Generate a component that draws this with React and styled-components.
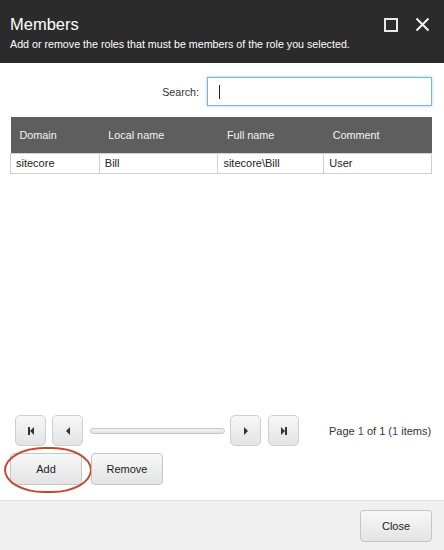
import React from "react";
import styled, { createGlobalStyle } from "styled-components";

const Global = createGlobalStyle`
  html, body { margin: 0; padding: 0; background: #fff; }
  body { font-family: Arial, "Liberation Sans", sans-serif; }
  * { box-sizing: border-box; }
`;

const Dialog = styled.div`
  width: 444px;
  height: 550px;
  display: flex;
  flex-direction: column;
  background: #fff;
`;

const Header = styled.div`
  background: #2b2b2b;
  height: 63px;
  padding: 13px 10px 0 10px;
  display: flex;
  justify-content: space-between;
  color: #fff;
`;

const Titles = styled.div`
  display: flex;
  flex-direction: column;
`;

const Title = styled.div`
  font-size: 16.5px;
  line-height: 22px;
`;

const Subtitle = styled.div`
  font-size: 10.7px;
  line-height: 14px;
  margin-top: 2px;
`;

const HeaderIcons = styled.div`
  display: flex;
  gap: 17px;
  padding-top: 4px;
  padding-right: 4px;
`;

const IconBtn = styled.div`
  width: 15px;
  height: 15px;
  display: flex;
  align-items: center;
  justify-content: center;
`;

const Body = styled.div`
  flex: 1;
  display: flex;
  flex-direction: column;
  padding: 14px 12px 0 10px;
`;

const SearchRow = styled.div`
  display: flex;
  justify-content: flex-end;
  align-items: center;
  gap: 8px;
`;

const Label = styled.label`
  font-size: 10.7px;
  color: #333;
`;

const Input = styled.div`
  width: 225px;
  height: 29px;
  border: 1px solid #7fb2e0;
  box-shadow: 0 0 3px rgba(102, 175, 233, 0.6);
  display: flex;
  align-items: center;
  padding-left: 11px;
`;

const Caret = styled.div`
  width: 1px;
  height: 14px;
  background: #222;
`;

const Table = styled.table`
  margin-top: 11px;
  width: 422px;
  border-collapse: collapse;
  font-size: 11px;
`;

const Th = styled.th`
  background: #5e5e5e;
  color: #f4f4f4;
  height: 36px;
  text-align: left;
  font-weight: normal;
  font-size: 10.8px;
  padding: 0 9px;
  width: ${(p) => p.$w}px;
`;

const Td = styled.td`
  height: 20px;
  border: 1px solid #d0d0d0;
  padding: 0 5px;
  color: #222;
`;

const Spacer = styled.div`
  flex: 1;
`;

const Pager = styled.div`
  display: flex;
  align-items: center;
  padding-left: 5px;
  height: 31px;
`;

const PageBtn = styled.button`
  width: 31px;
  height: 31px;
  border: 1px solid #cfcfcf;
  border-radius: 5px;
  background: linear-gradient(#f7f7f7, #e4e4e4);
  display: flex;
  align-items: center;
  justify-content: center;
  padding: 0;
  margin-right: ${(p) => p.$mr || 0}px;
`;

const Track = styled.div`
  width: 135px;
  height: 6px;
  border: 1px solid #c8c8c8;
  border-radius: 4px;
  background: linear-gradient(#f2f2f2, #e2e2e2);
  margin: 0 5px 0 7px;
`;

const PageInfo = styled.div`
  margin-left: 30px;
  font-size: 11px;
  color: #333;
  span { color: #5b3a8e; }
`;

const Actions = styled.div`
  display: flex;
  gap: 9px;
  margin-top: 7px;
  margin-bottom: 15px;
`;

const Button = styled.button`
  position: relative;
  width: ${(p) => p.$w || 72}px;
  height: 32px;
  border: 1px solid #c6c6c6;
  border-radius: 4px;
  background: linear-gradient(#f8f8f8, #e3e3e3);
  font-family: Arial, "Liberation Sans", sans-serif;
  font-size: 11px;
  color: #222;
  padding: 0;
`;

const Highlight = styled.div`
  position: absolute;
  left: -7px;
  top: -7px;
  width: 88px;
  height: 46px;
  border: 2px solid #c0492f;
  border-radius: 40px / 23px;
  pointer-events: none;
`;

const Footer = styled.div`
  height: 50px;
  background: #f0f0f0;
  border-top: 1px solid #e0e0e0;
  display: flex;
  justify-content: flex-end;
  align-items: center;
  padding-right: 12px;
`;

const Tri = ({ dir = "left", bar }) => (
  <svg width="10" height="10" viewBox="0 0 10 10">
    {dir === "left" ? (
      <>
        {bar && <rect x="2" y="1" width="2" height="8" fill="#333" />}
        <polygon points={bar ? "8,1 8,9 4,5" : "7,1 7,9 3,5"} fill="#333" />
      </>
    ) : (
      <>
        <polygon points={bar ? "2,1 2,9 6,5" : "3,1 3,9 7,5"} fill="#333" />
        {bar && <rect x="6" y="1" width="2" height="8" fill="#333" />}
      </>
    )}
  </svg>
);

export default function App() {
  return (
    <Dialog>
      <Global />
      <Header>
        <Titles>
          <Title>Members</Title>
          <Subtitle>Add or remove the roles that must be members of the role you selected.</Subtitle>
        </Titles>
        <HeaderIcons>
          <IconBtn>
            <svg width="14" height="14" viewBox="0 0 14 14">
              <rect x="1" y="1" width="12" height="12" fill="none" stroke="#e8e8e8" strokeWidth="2" />
            </svg>
          </IconBtn>
          <IconBtn>
            <svg width="15" height="15" viewBox="0 0 15 15">
              <path d="M1.5 1.5 L13.5 13.5 M13.5 1.5 L1.5 13.5" stroke="#f2f2f2" strokeWidth="2" />
            </svg>
          </IconBtn>
        </HeaderIcons>
      </Header>
      <Body>
        <SearchRow>
          <Label>Search:</Label>
          <Input>
            <Caret />
          </Input>
        </SearchRow>
        <Table>
          <thead>
            <tr>
              <Th $w={89}>Domain</Th>
              <Th $w={119}>Local name</Th>
              <Th $w={106}>Full name</Th>
              <Th $w={108}>Comment</Th>
            </tr>
          </thead>
          <tbody>
            <tr>
              <Td>sitecore</Td>
              <Td>Bill</Td>
              <Td>sitecore\Bill</Td>
              <Td>User</Td>
            </tr>
          </tbody>
        </Table>
        <Spacer />
        <Pager>
          <PageBtn $mr={6}><Tri dir="left" bar /></PageBtn>
          <PageBtn><Tri dir="left" /></PageBtn>
          <Track />
          <PageBtn $mr={7}><Tri dir="right" /></PageBtn>
          <PageBtn><Tri dir="right" bar /></PageBtn>
          <PageInfo>Page <span>1</span> of 1 (<span>1</span> items)</PageInfo>
        </Pager>
        <Actions>
          <Button $w={72}>
            Add
            <Highlight />
          </Button>
          <Button $w={72}>Remove</Button>
        </Actions>
      </Body>
      <Footer>
        <Button $w={72}>Close</Button>
      </Footer>
    </Dialog>
  );
}
